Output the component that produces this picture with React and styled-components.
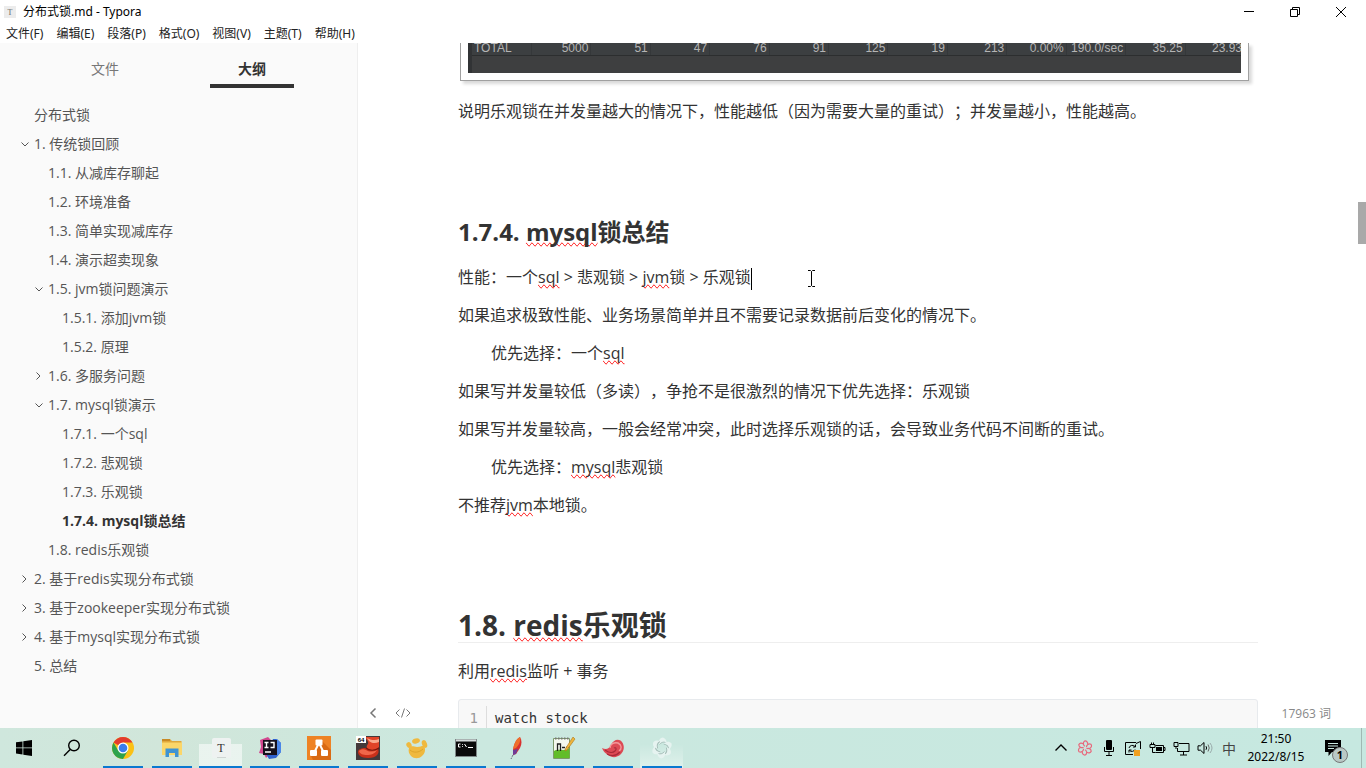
import React from "react";
import styled, { createGlobalStyle, css } from "styled-components";

const outline = [
  { text: "分布式锁", level: 0 },
  { text: "1. 传统锁回顾", level: 0, fold: "open" },
  { text: "1.1. 从减库存聊起", level: 1 },
  { text: "1.2. 环境准备", level: 1 },
  { text: "1.3. 简单实现减库存", level: 1 },
  { text: "1.4. 演示超卖现象", level: 1 },
  { text: "1.5. jvm锁问题演示", level: 1, fold: "open" },
  { text: "1.5.1. 添加jvm锁", level: 2 },
  { text: "1.5.2. 原理", level: 2 },
  { text: "1.6. 多服务问题", level: 1, fold: "closed" },
  { text: "1.7. mysql锁演示", level: 1, fold: "open" },
  { text: "1.7.1. 一个sql", level: 2 },
  { text: "1.7.2. 悲观锁", level: 2 },
  { text: "1.7.3. 乐观锁", level: 2 },
  { text: "1.7.4. mysql锁总结", level: 2, active: true },
  { text: "1.8. redis乐观锁", level: 1 },
  { text: "2. 基于redis实现分布式锁", level: 0, fold: "closed" },
  { text: "3. 基于zookeeper实现分布式锁", level: 0, fold: "closed" },
  { text: "4. 基于mysql实现分布式锁", level: 0, fold: "closed" },
  { text: "5. 总结", level: 0 },
];

const menus = ["文件(F)", "编辑(E)", "段落(P)", "格式(O)", "视图(V)", "主题(T)", "帮助(H)"];

const totals = [
  "TOTAL", "5000", "51", "47", "76", "91", "125", "19", "213",
  "0.00%", "190.0/sec", "35.25", "23.93",
];

const apps = [
  { name: "Chrome", icon: <ChromeIcon /> },
  { name: "文件资源管理器", icon: <FolderIcon /> },
  { name: "Typora", icon: <TyporaIcon />, focused: true },
  { name: "IntelliJ IDEA", icon: <IdeaIcon /> },
  { name: "draw.io", icon: <DrawioIcon /> },
  { name: "虚拟机", icon: <RedHatIcon /> },
  { name: "DBeaver", icon: <PawIcon /> },
  { name: "命令提示符", icon: <CmdIcon /> },
  { name: "JMeter", icon: <FeatherIcon /> },
  { name: "Notepad++", icon: <NotepadIcon /> },
  { name: "Redis", icon: <ShellIcon /> },
  { name: "录屏", icon: <SwirlIcon />, glow: true },
];

function App() {
  return (
    <Window>
      <GlobalStyle />
      <TitleBar>
        <TitleIcon viewBox="0 0 12 12">
          <rect width="12" height="12" fill="#ececec" />
          <text x="6" y="9" textAnchor="middle" fontSize="8" fontFamily="Liberation Serif, serif" fill="#666">
            T
          </text>
        </TitleIcon>
        <Title>分布式锁.md - Typora</Title>
        <WindowButtons>
          <WindowButton aria-label="最小化">
            <svg width="12" height="12" viewBox="0 0 12 12">
              <path d="M1 5.500h10" />
            </svg>
          </WindowButton>
          <WindowButton aria-label="还原">
            <svg width="12" height="12" viewBox="0 0 12 12">
              <path d="M1.500 3.500h7v7h-7zM3.500 3.500v-2h7v7h-2" />
            </svg>
          </WindowButton>
          <WindowButton aria-label="关闭">
            <svg width="12" height="12" viewBox="0 0 12 12">
              <path d="M1 1l10 10M11 1L1 11" />
            </svg>
          </WindowButton>
        </WindowButtons>
      </TitleBar>

      <MenuBar>
        {menus.map((menu) => (
          <MenuButton key={menu}>{menu}</MenuButton>
        ))}
      </MenuBar>

      <Body>
        <Sidebar>
          <Tabs>
            <Tab>文件</Tab>
            <Tab $active>大纲</Tab>
          </Tabs>
          <Outline>
            {outline.map((item) => (
              <OutlineItem key={item.text} href="#" $level={item.level} $active={item.active}>
                <Fold>{item.fold && <FoldIcon open={item.fold === "open"} />}</Fold>
                {item.text}
              </OutlineItem>
            ))}
          </Outline>
        </Sidebar>

        <Editor>
          <Article>
            <Figure>
              <Frame>
                <Shot>
                  <ResultTable>
                    <tbody>
                      <tr>
                        {totals.map((value) => (
                          <td key={value}>{value}</td>
                        ))}
                      </tr>
                    </tbody>
                  </ResultTable>
                </Shot>
              </Frame>
            </Figure>
            <Paragraph>
              说明乐观锁在并发量越大的情况下，性能越低（因为需要大量的重试）；并发量越小，性能越高。
            </Paragraph>

            <Heading3>
              1.7.4. <Spell>mysql</Spell>锁总结
            </Heading3>
            <Paragraph>
              性能：一个<Spell>sql</Spell> &gt; 悲观锁 &gt; <Spell>jvm</Spell>锁 &gt; 乐观锁
              <Caret />
              <Pointer viewBox="0 0 9 17">
                <path d="M1 .5h2.500l1 1 1-1H8M4.500 1.500v14M1 16.500h2.500l1-1 1 1H8" />
              </Pointer>
            </Paragraph>
            <Paragraph>如果追求极致性能、业务场景简单并且不需要记录数据前后变化的情况下。</Paragraph>
            <Paragraph $indent>
              优先选择：一个<Spell>sql</Spell>
            </Paragraph>
            <Paragraph>如果写并发量较低（多读），争抢不是很激烈的情况下优先选择：乐观锁</Paragraph>
            <Paragraph>
              如果写并发量较高，一般会经常冲突，此时选择乐观锁的话，会导致业务代码不间断的重试。
            </Paragraph>
            <Paragraph $indent>
              优先选择：<Spell>mysql</Spell>悲观锁
            </Paragraph>
            <Paragraph>
              不推荐<Spell>jvm</Spell>本地锁。
            </Paragraph>

            <Heading2>
              1.8. <Spell>redis</Spell>乐观锁
            </Heading2>
            <Paragraph>
              利用<Spell>redis</Spell>监听 + 事务
            </Paragraph>
            <CodeBlock>
              <LineNumber>1</LineNumber>
              <code>watch stock</code>
            </CodeBlock>
          </Article>

          <ScrollTrack>
            <ScrollThumb />
          </ScrollTrack>

          <Footer>
            <FooterButton aria-label="隐藏侧边栏">
              <svg width="8" height="12" viewBox="0 0 8 12">
                <path d="M6.500 1.500L2 6l4.500 4.500" strokeWidth="1.500" />
              </svg>
            </FooterButton>
            <FooterButton aria-label="源代码模式">
              <svg width="16" height="12" viewBox="0 0 16 12">
                <path d="M4.500 2.500L1 6l3.500 3.500M11.500 2.500L15 6l-3.500 3.500M9.500 1.500l-3 9" />
              </svg>
            </FooterButton>
            <WordCount>17963 词</WordCount>
          </Footer>
        </Editor>
      </Body>

      <Taskbar>
        <SystemButton aria-label="开始">
          <svg width="16" height="16" viewBox="0 0 16 16">
            <path d="M0 2.300l6.500-.9v6.100H0zM7.300 1.300L16 0v7.500H7.300zM0 8.300h6.500v6.200L0 13.600zM7.300 8.300H16V16l-8.700-1.300z" />
          </svg>
        </SystemButton>
        <SystemButton aria-label="搜索">
          <svg width="18" height="18" viewBox="0 0 18 18" fill="none" stroke="#000" strokeWidth="1.400">
            <circle cx="11" cy="6.500" r="5.300" />
            <path d="M7.200 10.400L1 16.700" />
          </svg>
        </SystemButton>
        <Apps>
          {apps.map((app) => (
            <AppButton key={app.name} aria-label={app.name} $focused={app.focused} $glow={app.glow}>
              {app.icon}
            </AppButton>
          ))}
        </Apps>
        <Tray>
          <TrayButton aria-label="显示隐藏的图标">
            <svg width="14" height="14" viewBox="0 0 14 14">
              <path d="M1.500 9.500L7 4l5.500 5.500" strokeWidth="1.400" />
            </svg>
          </TrayButton>
          <TrayButton aria-label="录屏">
            <svg width="16" height="16" viewBox="0 0 24 24">
              {[0, 60, 120, 180, 240, 300].map((angle) => (
                <path
                  key={angle}
                  d="M12 9.500C9 8 8.500 3.500 11.500 1.500c3-.5 5 2 4.500 5"
                  stroke="#e8687c"
                  strokeWidth="1.800"
                  transform={`rotate(${angle} 12 12)`}
                />
              ))}
            </svg>
          </TrayButton>
          <TrayButton aria-label="麦克风">
            <svg width="12" height="16" viewBox="0 0 12 16">
              <rect x="3" y="0" width="6" height="10" rx="1" fill="#000" stroke="none" />
              <path d="M1.500 7v4.500h9V7M6 11.500V15M3 15.500h6" />
            </svg>
          </TrayButton>
          <TrayButton aria-label="更新">
            <svg width="18" height="17" viewBox="0 0 18 17">
              <path d="M12 3.500l4.500-2V9M1.500 2.500H12M1.500 2.500v12H9" />
              <path d="M5 8a3.500 3.500 0 0 1 6-1.500M11.500 4.500v2.500H9M11 9.500a3.500 3.500 0 0 1-5.500 1M5 12.500V10h2.500" />
              <rect x="10" y="10" width="6" height="6" fill="#f0a020" stroke="none" />
            </svg>
          </TrayButton>
          <TrayButton aria-label="电源">
            <svg width="17" height="14" viewBox="0 0 17 14">
              <path d="M6.500 4.500h8v7h-8M14.500 6.500h1.500v3h-1.500M1 3.500h5v3H1zM2.500 3.500v-2M4.500 3.500v-2M3.500 6.500v5h3" />
              <path d="M7 6h6v4H7z" fill="#000" stroke="none" />
            </svg>
          </TrayButton>
          <TrayButton aria-label="网络">
            <svg width="17" height="15" viewBox="0 0 17 15">
              <path d="M6 2.500h10v8H4.500V7M10.500 10.500v3.500M7 14h7M1 1.500h4v4H1zM3 5.500V8" />
            </svg>
          </TrayButton>
          <TrayButton aria-label="音量">
            <svg width="17" height="14" viewBox="0 0 17 14">
              <path d="M1 4.800h2.500L7 1.500v11L3.500 9.200H1zM9 5.200q1.200 1.800 0 3.600" />
              <path d="M11 3.500q2.500 3.500 0 7" stroke="#666" />
              <path d="M13 2q4 5 0 10" stroke="#9aa" />
            </svg>
          </TrayButton>
          <TrayButton aria-label="输入法">中</TrayButton>
          <Clock>
            <span>21:50</span>
            <span>2022/8/15</span>
          </Clock>
          <NoticeButton aria-label="通知">
            <svg width="18" height="18" viewBox="0 0 18 18">
              <path d="M1 1h16v12H8l-3.500 4v-4H1z" fill="#000" />
              <path d="M4 4.500h10M4 7h10M4 9.500h6" stroke="#cbe8e0" />
            </svg>
            <Badge>1</Badge>
          </NoticeButton>
          <ShowDesktop aria-label="显示桌面" />
        </Tray>
      </Taskbar>
    </Window>
  );
}

export default App;

function FoldIcon({ open }) {
  return (
    <svg width="8" height="8" viewBox="0 0 8 8" fill="none" stroke="#555">
      <path d={open ? "M.5 2.500L4 6l3.500-3.500" : "M1.500 .5L5 4 1.500 7.500"} />
    </svg>
  );
}

function ChromeIcon() {
  return (
    <svg width="24" height="24" viewBox="0 0 24 24">
      <circle cx="12" cy="12" r="11" fill="#fbc116" />
      <path d="M12 12L2.500 6.500A11 11 0 0 1 21.500 6.500H12z" fill="#e33b2e" />
      <path d="M2.500 6.500A11 11 0 0 0 12 23l4.800-8.300L12 12 7.300 14.800z" fill="#2da24c" />
      <circle cx="12" cy="12" r="5.500" fill="#fff" />
      <circle cx="12" cy="12" r="4.300" fill="#3b7ded" />
    </svg>
  );
}

function FolderIcon() {
  return (
    <svg width="24" height="24" viewBox="0 0 24 24">
      <path d="M2 3h8l2 2h9.500v14H2z" fill="#e0a83c" />
      <path d="M2 6.500h20V19H2z" fill="#fbd669" />
      <path d="M5.500 12.500h13V21h-3.500v-4H9v4H5.500z" fill="#3f93d2" />
      <path d="M2 3h8v2H2z" fill="#c88a26" />
    </svg>
  );
}

function TyporaIcon() {
  return (
    <svg width="24" height="24" viewBox="0 0 24 24">
      <rect x="3" y="2" width="19" height="20" rx="2" fill="#eef2f1" />
      <path d="M8 21.500h9" stroke="#d0d6d4" />
      <text x="12" y="16" textAnchor="middle" fontSize="12" fontFamily="Liberation Serif, serif" fill="#333">
        T
      </text>
    </svg>
  );
}

function IdeaIcon() {
  return (
    <svg width="24" height="24" viewBox="0 0 24 24">
      <path d="M2 4l8-3 5 5-3 12-4 4-2-4-5-1 2-6z" fill="#d2478f" />
      <path d="M15 3h4l4 4v9l-5 6-7 1-3-5z" fill="#2f62cf" />
      <path d="M18 3l5 4v9l-4 4z" fill="#4a86e8" />
      <rect x="5" y="4" width="14" height="15" fill="#15101c" />
      <path d="M6.500 6.500h4M8.500 6.500v5M6.500 11.500h4M12.500 6.500h3.500v5h-3.500M7 16h6" stroke="#fff" strokeWidth="1.400" fill="none" />
    </svg>
  );
}

function DrawioIcon() {
  return (
    <svg width="24" height="24" viewBox="0 0 24 24">
      <rect width="24" height="24" fill="#ee8224" />
      <path d="M15 5l9 9v10H6l-2-4z" fill="#d96a14" />
      <path d="M12 7L7 17M12 7l5 10" stroke="#fff" strokeWidth="2" />
      <rect x="8.500" y="3.500" width="7" height="6" rx="1" fill="#fff" />
      <rect x="3" y="14" width="7" height="6" rx="1" fill="#fff" />
      <rect x="14" y="14" width="7" height="6" rx="1" fill="#fff" />
    </svg>
  );
}

function RedHatIcon() {
  return (
    <svg width="24" height="24" viewBox="0 0 24 24">
      <rect width="24" height="24" fill="#44393a" />
      <path d="M2 16c0-3 4-4 7-4l13 1c2 4-1 9-10 9C5 22 2 19 2 16z" fill="#c9301a" />
      <path d="M3 15c2-2 5-2 7-1 3 2 7 2 11 0-2 4-6 5-10 5-4 0-7-1-8-4z" fill="#f0674a" />
      <path d="M9 1h14v10c-2 3-6 4-9 3-4-1-4-4-2-6 1-2-1-4-3-7z" fill="#e04428" />
      <path d="M11 2c3 2 8 3 12 1v3c-4 2-8 1-10-1z" fill="#f9a98c" />
      <path d="M10 12c3 3 9 3 13 0" stroke="#7b150b" fill="none" strokeWidth="1.200" />
      <rect width="10" height="7" fill="#fff" />
      <text x="5" y="6" textAnchor="middle" fontSize="6" fontWeight="bold" fontFamily="Liberation Sans, sans-serif">
        64
      </text>
    </svg>
  );
}

function PawIcon() {
  return (
    <svg width="24" height="24" viewBox="0 0 24 24" fill="#efb93f">
      <path d="M4 12c2-3 5-1 8-1 4 0 5-2 7-1 2 3 1 8-2 10-3 3-8 3-11 0-2-2-3-5-2-8z" />
      <ellipse cx="4" cy="9" rx="2.500" ry="3" transform="rotate(-30 4 9)" />
      <ellipse cx="11" cy="5" rx="4" ry="2.500" transform="rotate(-15 11 5)" />
      <ellipse cx="19.500" cy="8" rx="2.500" ry="4" transform="rotate(-20 19.500 8)" />
      <path d="M5 14c3 3 9 3 13-1" stroke="#dda52b" fill="none" />
    </svg>
  );
}

function CmdIcon() {
  return (
    <svg width="24" height="24" viewBox="0 0 24 24">
      <rect x="1.500" y="3.500" width="21" height="17" fill="#0a0a0a" stroke="#7f8888" />
      <path d="M2 3.500h20v2H2z" fill="#d7dcdc" />
      <path d="M6.500 8h-2v3h2M8.500 8v.8M8.500 10v.8M10.500 8l2 3M14 11.500h5" stroke="#fff" fill="none" />
    </svg>
  );
}

function FeatherIcon() {
  return (
    <svg width="24" height="24" viewBox="0 0 24 24">
      <path d="M17 1c2 3 2 7 0 11l-4 6-3 1v-5c1-6 3-11 7-13z" fill="#d9302f" />
      <path d="M17 1c-4 2-6 7-7 12l3-1c3-3 5-7 4-11z" fill="#ef6f2a" />
      <path d="M10 14l5-1-2 5-3 1z" fill="#6f3a96" />
      <path d="M10 19l-2 4" stroke="#667" strokeDasharray="2 1" />
    </svg>
  );
}

function NotepadIcon() {
  return (
    <svg width="24" height="24" viewBox="0 0 24 24">
      <path d="M1.500 2.500h16v20h-16z" fill="#f4f8ee" stroke="#7e9a6b" />
      <path d="M2 15c5-3 10 1 15.500-3v10H2z" fill="#62bd2a" />
      <path d="M3 2.500h14" stroke="#777" strokeWidth="2" strokeDasharray="1.500 1.500" />
      <path d="M5.500 15V8h3v7M10 11.500h3M14 11.500h3" stroke="#222" strokeWidth="1.300" fill="none" />
      <path d="M21 1l2 2-8 11-2 1 .5-2.500z" fill="#efb53c" stroke="#a8761a" strokeWidth=".6" />
    </svg>
  );
}

function ShellIcon() {
  return (
    <svg width="24" height="24" viewBox="0 0 24 24">
      <path d="M1 12c4 2 7 1 9-3 2-5 8-7 11-3 3 4 2 9-1 12-4 4-9 4-13 1-3-2-5-4-6-7z" fill="#dc4a54" />
      <path d="M9 12c0-4 4-6 8-5 4 2 4 6 1 8" stroke="#f3989b" strokeWidth="1.400" fill="none" />
      <path d="M4 14c4 3 8 3 10 1 2-2 1-4-1-3M6 18c5 3 10 1 13-2" stroke="#a92a38" strokeWidth="1.200" fill="none" />
    </svg>
  );
}

function SwirlIcon() {
  return (
    <svg width="24" height="24" viewBox="0 0 24 24" fill="none">
      {[0, 60, 120, 180, 240, 300].map((angle) => (
        <g key={angle} transform={`rotate(${angle} 12 12)`}>
          <path d="M9.500 8.500C8 5 9.500 2 13 1.500c2.500 1 4 3 3.500 5.500C14 5.500 11.500 6 9.500 8.500z" fill="#e6f3f0" />
          <path d="M9.500 8.500C11.500 6 14 5.500 16.500 7" stroke="#a3bab5" strokeWidth=".9" />
        </g>
      ))}
    </svg>
  );
}

const GlobalStyle = createGlobalStyle`
  body {
    margin: 0;
    font-family: "Open Sans", "Noto Sans CJK SC", sans-serif;
    color: #333;
    background: #fff;
    text-spacing-trim: space-all;
  }

  button {
    padding: 0;
    border: none;
    background: none;
    font-family: inherit;
    color: inherit;
  }

  svg {
    display: block;
    flex: none;
  }
`;

const Window = styled.div`
  display: flex;
  flex-direction: column;
  height: 100vh;
  overflow: hidden;
`;

const TitleBar = styled.header`
  display: flex;
  align-items: center;
  height: 24px;
  padding: 0 2px 0 4px;
  color: #000;
`;

const TitleIcon = styled.svg`
  width: 12px;
  height: 12px;
`;

const Title = styled.span`
  margin-left: 7px;
  font-family: "Noto Sans", "Noto Sans CJK SC", sans-serif;
  font-size: 12px;
  line-height: 24px;
`;

const WindowButtons = styled.div`
  display: flex;
  margin-left: auto;
`;

const WindowButton = styled.button`
  display: flex;
  justify-content: center;
  align-items: center;
  width: 46px;
  height: 22px;

  svg {
    fill: none;
    stroke: #000;
  }
`;

const MenuBar = styled.nav`
  display: flex;
  gap: 13px;
  height: 19px;
  padding: 0 6px;
`;

const MenuButton = styled.button`
  font-family: "Noto Sans", "Noto Sans CJK SC", sans-serif;
  font-size: 12px;
  line-height: 19px;
  color: #222;
`;

const Body = styled.div`
  display: flex;
  flex: 1;
  min-height: 0;
`;

const Sidebar = styled.aside`
  flex: none;
  width: 357px;
  border-right: 1px solid #eee;
  background: #fafafa;
  overflow: hidden;
`;

const Tabs = styled.div`
  display: flex;
  justify-content: space-evenly;
`;

const Tab = styled.button`
  width: 84px;
  height: 45px;
  padding-top: 10px;
  border-bottom: 4px solid transparent;
  font-size: 14px;
  line-height: 30px;
  color: #777;

  ${(props) =>
    props.$active &&
    css`
      border-bottom-color: #333;
      font-weight: 700;
      color: #333;
    `}
`;

const Outline = styled.nav`
  padding-top: 12px;
`;

const OutlineItem = styled.a`
  display: flex;
  align-items: center;
  padding-left: ${(props) => 18 + props.$level * 14}px;
  font-size: 14px;
  font-weight: ${(props) => (props.$active ? 700 : 400)};
  line-height: 29px;
  color: ${(props) => (props.$active ? "#333" : "#555")};
  text-decoration: none;
  white-space: pre;
`;

const Fold = styled.span`
  display: flex;
  width: 16px;
  padding-left: 3px;
  box-sizing: border-box;
`;

const Editor = styled.main`
  position: relative;
  display: flex;
  flex: 1;
  min-width: 0;
  overflow: hidden;
`;

const Article = styled.article`
  flex: 1;
  min-width: 0;
  max-width: 800px;
  margin: 0 auto;
`;

const Figure = styled.figure`
  margin: 0 0 17px;
  padding: 0 9px 0 2px;
`;

const Frame = styled.div`
  padding: 0 7px 7px;
  border: 1px solid #a0a0a0;
  border-top: none;
  box-shadow: 3px 3px 3px rgba(0, 0, 0, 0.15);
`;

const Shot = styled.div`
  height: 30px;
  border-left: 4px solid #313335;
  background: #3e3f40;
  overflow: hidden;
`;

const ResultTable = styled.table`
  width: calc(100% + 4px);
  table-layout: fixed;
  border-collapse: collapse;
  font-family: "Liberation Sans", Arial, sans-serif;
  font-size: 12px;
  line-height: 10px;
  color: #b4b4b4;

  td {
    height: 12px;
    padding: 0 2px 2px;
    box-sizing: border-box;
    border-right: 1px solid #35383a;
    border-bottom: 1px solid #2c2e2f;
    background: #3c3f41;
    text-align: right;
  }

  td:first-child {
    text-align: left;
  }
`;

const Paragraph = styled.p`
  display: flow-root;
  margin: 0 0 12px;
  padding-left: ${(props) => (props.$indent ? 33 : 0)}px;
  font-size: 16px;
  line-height: 26px;
`;

const Heading3 = styled.h3`
  margin: 91px 0 15px;
  font-size: 24px;
  line-height: 34px;
`;

const Heading2 = styled.h2`
  margin: 90px 0 15px;
  border-bottom: 1px solid #eee;
  font-size: 28px;
  line-height: 34px;
`;

const Spell = styled.span`
  text-decoration-line: spelling-error;
`;

const Caret = styled.span`
  display: inline-block;
  width: 1px;
  height: 22px;
  background: #000;
  vertical-align: middle;
`;

const Pointer = styled.svg`
  display: inline-block;
  width: 9px;
  height: 17px;
  margin-left: 55px;
  fill: none;
  stroke: #000;
  vertical-align: middle;
`;

const CodeBlock = styled.pre`
  display: flex;
  height: 60px;
  margin: 15px 0 0;
  padding-top: 6px;
  border: 1px solid #e7eaed;
  border-radius: 3px;
  background: #f8f8f8;
  font-size: 14px;
  line-height: 24px;

  code {
    padding-left: 8px;
    font-family: "DejaVu Sans Mono", monospace;
  }
`;

const LineNumber = styled.span`
  width: 19px;
  padding-right: 8px;
  border-right: 1px solid #ddd;
  font-family: "DejaVu Sans Mono", monospace;
  text-align: right;
  color: #999;
`;

const ScrollTrack = styled.div`
  flex: none;
  width: 8px;
  padding-top: 159px;
`;

const ScrollThumb = styled.div`
  height: 42px;
  background: #a9a9a9;
`;

const Footer = styled.footer`
  position: absolute;
  right: 0;
  bottom: 0;
  left: 0;
  display: flex;
  align-items: center;
  gap: 18px;
  height: 30px;
  padding: 0 35px 0 11px;
`;

const FooterButton = styled.button`
  svg {
    fill: none;
    stroke: #777;
  }
`;

const WordCount = styled.span`
  margin-left: auto;
  font-size: 12px;
  color: #888;
`;

const Taskbar = styled.footer`
  display: flex;
  flex: none;
  height: 40px;
  background: linear-gradient(90deg, #cfe7dd, #d1e6da 12%, #cbe8df 35%, #c6e8e0);
`;

const SystemButton = styled.button`
  display: flex;
  justify-content: center;
  align-items: center;
  width: 48px;
`;

const Apps = styled.div`
  display: flex;
  margin-left: 2px;
`;

const AppButton = styled.button`
  display: flex;
  flex-direction: column;
  align-items: center;
  width: 49px;
  padding: 8px 3px 0;

  &::after {
    content: "";
    width: 40px;
    height: 2px;
    margin-top: auto;
    background: #0a78d0;
  }

  ${(props) =>
    props.$focused &&
    css`
      background: linear-gradient(transparent 16px, rgba(255, 255, 255, 0.55) 16px) center / 43px 100% no-repeat;

      &::after {
        width: 43px;
      }
    `}

  ${(props) =>
    props.$glow &&
    css`
      background: linear-gradient(transparent 16px, rgba(255, 255, 255, 0.4)) center / 43px 100% no-repeat;
    `}
`;

const Tray = styled.div`
  display: flex;
  margin-left: auto;
  color: #000;
`;

const TrayButton = styled.button`
  display: flex;
  justify-content: center;
  align-items: center;
  width: 24px;
  font-size: 14px;
  color: #444;

  svg {
    fill: none;
    stroke: #000;
  }
`;

const Clock = styled.div`
  display: flex;
  flex-direction: column;
  align-items: center;
  width: 70px;
  padding-top: 2px;
  font-family: "Noto Sans", sans-serif;
  font-size: 12px;
  line-height: 18px;
`;

const NoticeButton = styled.button`
  position: relative;
  display: flex;
  justify-content: center;
  align-items: center;
  width: 50px;
  padding-right: 6px;
`;

const Badge = styled.span`
  position: absolute;
  right: 13px;
  bottom: 5px;
  width: 14px;
  height: 14px;
  border: 1px solid #777;
  border-radius: 50%;
  background: #b9c9c5;
  font-size: 11px;
  font-weight: 700;
  line-height: 14px;
`;

const ShowDesktop = styled.button`
  width: 5px;
  border-left: 1px solid #9fb9b3;
`;
